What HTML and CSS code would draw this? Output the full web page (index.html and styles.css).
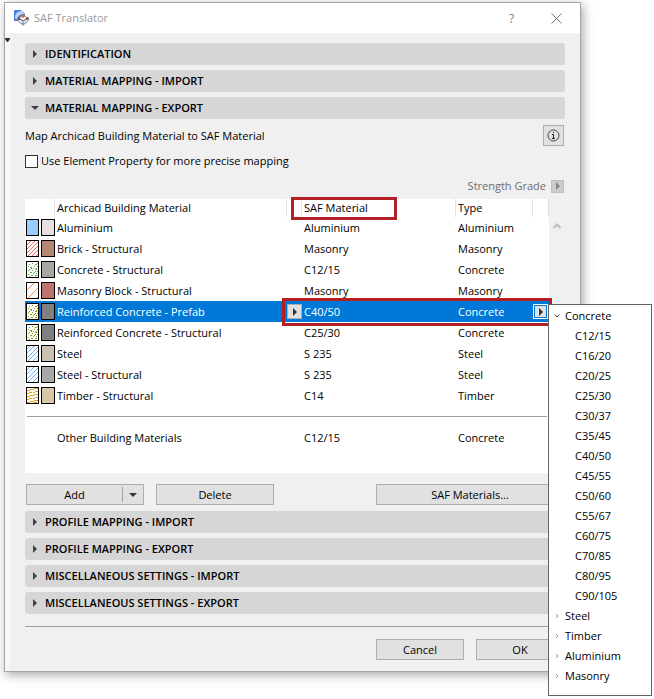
FILE: index.html
```html
<!DOCTYPE html>
<html lang="en">
<head>
<meta charset="utf-8">
<title>SAF Translator</title>
<link rel="stylesheet" href="styles.css">
</head>
<body>
<svg class="defs" width="0" height="0" aria-hidden="true">
  <defs>
    <symbol id="brick" viewBox="0 0 11 15"><path d="M-1 5L5-1M-1 9L9-1M-1 13L13-1M-1 17L17-1M-1 21L21-1M-1 25L25-1" stroke="#f4675e"/></symbol>
    <symbol id="block" viewBox="0 0 11 15"><path d="M-1 8L8-1M-1 17L17-1M5 20L14 11" stroke="#f58a45"/></symbol>
    <symbol id="steel" viewBox="0 0 11 15"><path d="M-1 4L4-1M-1 8L8-1M-1 13L13-1M-1 17L17-1M-1 22L22-1M-1 26L26-1" stroke="#6db1fa"/></symbol>
    <symbol id="timber" viewBox="0 0 11 15"><path d="M0 2h3v1h-3zM3 1h4v1h-4zM7 0h4v1h-4zM0 5h2v1h-2zM2 4h3v1h-3zM6 4h2v1h-2zM8 3h3v1h-3zM0 8h3v1h-3zM3 7h4v1h-4zM7 6h4v1h-4zM0 11h2v1h-2zM2 10h3v1h-3zM6 10h2v1h-2zM8 9h3v1h-3zM0 14h3v1h-3zM3 13h4v1h-4zM7 12h4v1h-4zM7 14h3v1h-3z" fill="#e2a322"/></symbol>
    <path id="grain" d="M3 3h1v1h-1zM6 2h1v1h-1zM9 3h2v1h-2zM11 5h1v1h-1zM4 6h2v1h-2zM5 7h1v1h-1zM8 5h1v1h-1zM2 9h1v1h-1zM6 9h1v1h-1zM9 8h2v1h-2zM10 7h1v1h-1zM11 10h1v1h-1zM4 11h2v1h-2zM7 12h1v1h-1zM10 12h1v1h-1zM2 13h1v1h-1zM5 14h2v1h-2zM9 14h2v1h-2zM11 2h1v1h-1zM7 7h1v1h-1zM3 8h1v1h-1zM8 11h1v1h-1zM2 5h1v1h-1zM3 15h1v1h-1zM9 10h1v1h-1z"/>
    <symbol id="right" viewBox="0 0 4 8"><path d="M0 0L4 4L0 8Z" fill="currentColor"/></symbol>
    <symbol id="down" viewBox="0 0 8 4"><path d="M0 0H8L4 4Z" fill="currentColor"/></symbol>
    <symbol id="chevron" viewBox="0 0 4 6"><path d="M1 1L3 3L1 5" fill="none" stroke="currentColor"/></symbol>
  </defs>
</svg>

<main class="dialog">
  <header class="titlebar">
    <svg class="logo" viewBox="0 0 16 16" aria-hidden="true">
      <path d="M0 1Q0 0 1 0H7L11 4V7L5 11H0Z" fill="#4a7fe0"/>
      <path d="M1 8C1 3 4 1 8 1L10 4C6 4 4 6 3 9Z" fill="#bcd4fa"/>
      <path d="M4 9L9 5L15 9L13 12L9 15L5 12Z" fill="#f3f3f4" stroke="#8a8f96"/>
      <path d="M4 8L9 11L15 8" fill="none" stroke="#454b55"/>
      <path d="M7 6L9 4L11 6L9 8Z" fill="#cf6a42"/>
      <path d="M4 7l2 1v2l-2-1zM14 7l-2 1v2l2-1z" fill="#6d4438"/>
      <path d="M7 13l2-1 2 1-2 3z" fill="#7f9dbd"/>
    </svg>
    <h1>SAF Translator</h1>
    <button class="title-button" type="button">?</button>
    <button class="title-button" type="button" aria-label="Close"><svg width="11" height="11" viewBox="0 0 11 11"><path d="M.5 .5L10.5 10.5M10.5 .5L.5 10.5" stroke="#777"/></svg></button>
  </header>

  <div class="body">
    <div class="gutter"><svg width="5" height="4" viewBox="0 0 5 4"><path d="M0 0H5V1L3 4H2L0 1Z" fill="currentColor"/></svg></div>
    <div class="content">
      <div class="sections">
        <button class="section" type="button"><svg><use href="#right"/></svg>IDENTIFICATION</button>
        <button class="section" type="button"><svg><use href="#right"/></svg>MATERIAL MAPPING - IMPORT</button>
        <button class="section open" type="button" aria-expanded="true"><svg><use href="#down"/></svg>MATERIAL MAPPING - EXPORT</button>
      </div>

      <div class="intro">
        <span>Map Archicad Building Material to SAF Material</span>
        <button class="info" type="button" aria-label="Information"><svg width="13" height="13" viewBox="0 0 13 13"><circle cx="6.5" cy="6.5" r="5.5" fill="none" stroke="#37474f"/><path d="M6 3h1v1h-1zM5 5h2v4h1v1h-3v-1h1v-3h-1z" fill="#222"/></svg></button>
      </div>
      <div class="option"><input type="checkbox" id="property"><label for="property">Use Element Property for more precise mapping</label></div>
      <div class="grade"><span>Strength Grade</span><button class="step" type="button" disabled aria-label="Choose strength grade"><svg><use href="#right"/></svg></button></div>

      <div class="list">
        <div class="materials">
          <table>
            <colgroup><col class="c-swatch"><col><col class="c-pick"><col class="c-saf"><col class="c-type"><col class="c-more"></colgroup>
            <thead><tr><th></th><th>Archicad Building Material</th><th></th><th class="marked">SAF Material</th><th>Type</th><th></th></tr></thead>
            <tbody>
              <tr><td><svg class="swatch"><rect class="hatch" fill="#99ccff"/><rect class="surface" fill="#e8dfdf"/></svg></td><td>Aluminium</td><td></td><td>Aluminium</td><td>Aluminium</td><td></td></tr>
              <tr><td><svg class="swatch"><rect class="hatch" fill="#fff"/><use href="#brick" x="1" y="1" width="11" height="15"/><rect class="surface" fill="#b58474"/></svg></td><td>Brick - Structural</td><td></td><td>Masonry</td><td>Masonry</td><td></td></tr>
              <tr><td><svg class="swatch"><rect class="hatch" fill="#fff"/><use href="#grain" fill="#56ab3e"/><rect class="surface" fill="#a5a89e"/></svg></td><td>Concrete - Structural</td><td></td><td>C12/15</td><td>Concrete</td><td></td></tr>
              <tr><td><svg class="swatch"><rect class="hatch" fill="#fff"/><use href="#block" x="1" y="1" width="11" height="15"/><rect class="surface" fill="#bd746e"/></svg></td><td>Masonry Block - Structural</td><td></td><td>Masonry</td><td>Masonry</td><td></td></tr>
              <tr class="selected"><td><svg class="swatch"><rect class="hatch" fill="#fff"/><use href="#grain" fill="#999900"/><rect class="surface" fill="#808080"/></svg></td><td>Reinforced Concrete - Prefab</td><td><button class="step" type="button" aria-label="Choose material"><svg><use href="#right"/></svg></button></td><td>C40/50</td><td>Concrete</td><td><button class="step active" type="button" aria-label="Choose type"><svg><use href="#right"/></svg></button></td></tr>
              <tr><td><svg class="swatch"><rect class="hatch" fill="#fff"/><use href="#grain" fill="#999900"/><rect class="surface" fill="#808080"/></svg></td><td>Reinforced Concrete - Structural</td><td></td><td>C25/30</td><td>Concrete</td><td></td></tr>
              <tr><td><svg class="swatch"><rect class="hatch" fill="#fff"/><use href="#steel" x="1" y="1" width="11" height="15"/><rect class="surface" fill="#cac2b2"/></svg></td><td>Steel</td><td></td><td>S 235</td><td>Steel</td><td></td></tr>
              <tr><td><svg class="swatch"><rect class="hatch" fill="#fff"/><use href="#steel" x="1" y="1" width="11" height="15"/><rect class="surface" fill="#a8a8a8"/></svg></td><td>Steel - Structural</td><td></td><td>S 235</td><td>Steel</td><td></td></tr>
              <tr><td><svg class="swatch"><rect class="hatch" fill="#fff"/><use href="#timber" x="1" y="1" width="11" height="15"/><rect class="surface" fill="#d7c8a9"/></svg></td><td>Timber - Structural</td><td></td><td>C14</td><td>Timber</td><td></td></tr>
              <tr class="divider"><td colspan="6"><hr></td></tr>
              <tr><td></td><td>Other Building Materials</td><td></td><td>C12/15</td><td>Concrete</td><td></td></tr>
            </tbody>
          </table>
          <div class="row-mark"></div>
          <ul class="popup">
            <li><button class="group" type="button"><svg width="6" height="4" viewBox="0 0 6 4"><path d="M.5 .5L3 3L5.5 .5" fill="none" stroke="#444"/></svg>Concrete</button>
              <ul>
                <li><button type="button">C12/15</button></li>
                <li><button type="button">C16/20</button></li>
                <li><button type="button">C20/25</button></li>
                <li><button type="button">C25/30</button></li>
                <li><button type="button">C30/37</button></li>
                <li><button type="button">C35/45</button></li>
                <li><button type="button">C40/50</button></li>
                <li><button type="button">C45/55</button></li>
                <li><button type="button">C50/60</button></li>
                <li><button type="button">C55/67</button></li>
                <li><button type="button">C60/75</button></li>
                <li><button type="button">C70/85</button></li>
                <li><button type="button">C80/95</button></li>
                <li><button type="button">C90/105</button></li>
              </ul>
            </li>
            <li><button class="group" type="button"><svg width="6" height="6"><use href="#chevron"/></svg>Steel</button></li>
            <li><button class="group" type="button"><svg width="6" height="6"><use href="#chevron"/></svg>Timber</button></li>
            <li><button class="group" type="button"><svg width="6" height="6"><use href="#chevron"/></svg>Aluminium</button></li>
            <li><button class="group" type="button"><svg width="6" height="6"><use href="#chevron"/></svg>Masonry</button></li>
          </ul>
        </div>
        <div class="scroll"><svg width="8" height="6" viewBox="0 0 8 6"><path d="M.5 5L4 1.5L7.5 5" fill="none" stroke="#bdbdbd" stroke-width="2"/></svg></div>
      </div>

      <div class="actions">
        <div class="split"><button type="button">Add</button><button class="split-arrow" type="button" aria-label="More add options"><svg width="8" height="4"><use href="#down"/></svg></button></div>
        <button class="push" type="button">Delete</button>
        <button class="push wide" type="button">SAF Materials...</button>
      </div>

      <div class="sections">
        <button class="section" type="button"><svg><use href="#right"/></svg>PROFILE MAPPING - IMPORT</button>
        <button class="section" type="button"><svg><use href="#right"/></svg>PROFILE MAPPING - EXPORT</button>
        <button class="section" type="button"><svg><use href="#right"/></svg>MISCELLANEOUS SETTINGS - IMPORT</button>
        <button class="section" type="button"><svg><use href="#right"/></svg>MISCELLANEOUS SETTINGS - EXPORT</button>
      </div>

      <footer>
        <button class="push small" type="button">Cancel</button>
        <button class="push small" type="button">OK</button>
      </footer>
    </div>
  </div>
</main>
</body>
</html>
```

FILE: styles.css
```css
* { box-sizing: border-box; }
body {
  margin: 0;
  padding: 2px 73px 27px 4px;
  background: #fff;
  color: #000;
  font: 11px/20px "Open Sans", "Noto Sans", sans-serif;
}
button { margin: 0; padding: 0; border: 0; background: none; color: inherit; font: inherit; }
svg { display: block; }
.defs { position: absolute; }
.dialog { border: 1px solid #a5a5a5; background: #f0f0f0; box-shadow: 2px 3px 10px rgba(0, 0, 0, .35); }
.titlebar { display: flex; align-items: center; height: 30px; padding: 0 1px 0 9px; background: #fff; }
.logo { width: 16px; height: 16px; margin-right: 4px; }
h1 { flex: 1; margin: 0; color: #999; font-size: 11px; font-weight: 400; }
.title-button { display: grid; place-items: center; width: 45px; height: 30px; color: #888; font-size: 13px; }

.body { display: flex; }
.gutter { width: 5px; padding-top: 5px; background: #f7f7f7; color: #333; }
.content { flex: 1; min-width: 0; padding: 10px 15px 11px; }
.sections { display: grid; gap: 5px; }
.section { display: flex; align-items: center; height: 22px; padding-left: 8px; border-radius: 3px; background: #d6d6d6; font-weight: 600; text-align: left; }
.section svg { width: 4px; height: 8px; margin-right: 8px; color: #404040; }
.section.open svg { width: 8px; height: 4px; margin-right: 6px; margin-left: -2px; }

.intro { display: flex; justify-content: space-between; align-items: center; height: 21px; margin-top: 6px; padding-right: 1px; }
.info { display: grid; place-items: center; width: 21px; height: 21px; border: 1px solid #adadad; background: #e1e1e1; }
.option { display: flex; align-items: center; gap: 3px; height: 20px; margin-top: 5px; }
input { appearance: none; width: 13px; height: 13px; margin: 0; border: 1px solid #333; background: #fff; }
.grade { display: flex; justify-content: flex-end; align-items: center; gap: 5px; height: 20px; margin: 5px 1px 3px 0; color: #6d6d6d; }
.step { display: grid; place-items: center; width: 13px; height: 13px; border: 1px solid #adadad; background: #e1e1e1; color: #333; }
.step svg { width: 4px; height: 8px; }
.step:disabled { border-color: #bfbfbf; background: #ccc; color: #888; }

.list { display: flex; }
.materials { position: relative; flex: 1; min-width: 0; padding-bottom: 25px; background: #fff; }
.scroll { width: 16px; padding: 24px 0 0 4px; }
table { width: 100%; table-layout: fixed; border-collapse: separate; border-spacing: 0; }
.c-swatch { width: 30px; }
.c-pick { width: 15px; }
.c-saf { width: 154px; }
.c-type { width: 77px; }
.c-more { width: 16px; }
th, td { height: 21px; padding: 0 0 0 2px; font-weight: 400; line-height: 18px; text-align: left; white-space: nowrap; }
th { position: relative; height: 18px; border-right: 1px solid #e2e2e2; }
td:first-child { padding: 0 0 0 1px; }
.marked::after { content: ""; position: absolute; inset: -2px 58px -3px -11px; border: 3px solid #b22025; }
.selected { background: #0078d7; color: #fff; }
.selected .step { width: 15px; height: 15px; margin-left: -2px; }
.selected .step.active { border-color: #fff; background: #e1e1e1; box-shadow: inset 0 0 0 1px #0078d7; }
.swatch { width: 29px; height: 17px; }
.hatch, .surface { y: 0.5px; height: 16px; stroke: #000; }
.hatch { x: 0.5px; width: 12px; }
.surface { x: 15.5px; width: 13px; }
.divider td { padding: 0 2px; }
hr { height: 1px; margin: 0; border: 0; background: #a0a0a0; }
.row-mark { position: absolute; top: 99px; right: -3px; width: 270px; height: 28px; border: 3px solid #b22025; }

.popup { position: absolute; top: 105px; left: calc(100% - 1px); width: 104px; padding: 1px 0 9px; border: 1px solid #646464; background: #fff; }
ul { margin: 0; padding: 0; list-style: none; }
.popup button { display: flex; align-items: center; width: 100%; height: 20px; padding-left: 26px; text-align: left; }
.popup .group { gap: 5px; padding-left: 5px; }
.group svg { color: #999; }

.actions { display: flex; gap: 12px; margin: 11px 1px 6px; }
.push, .split { width: 118px; height: 21px; border: 1px solid #adadad; background: #e1e1e1; line-height: 19px; }
.wide { width: 188px; margin-left: auto; }
.split { display: flex; align-items: center; }
.split > button:first-child { flex: 1; }
.split-arrow { display: grid; place-items: center; width: 21px; height: 15px; border-left: 1px solid #a0a0a0; color: #333; }
footer { display: flex; justify-content: flex-end; gap: 12px; margin-top: 12px; padding: 12px 1px 0 0; border-top: 1px solid #a0a0a0; }
.small { width: 88px; }
```
